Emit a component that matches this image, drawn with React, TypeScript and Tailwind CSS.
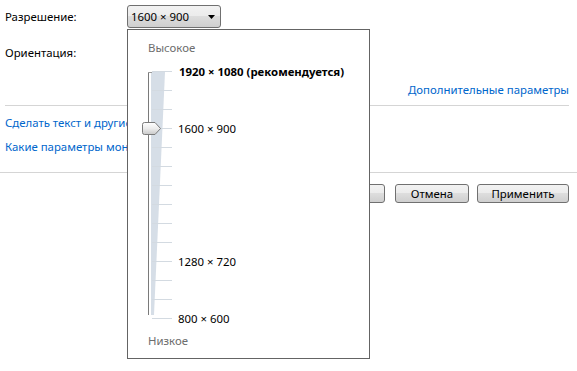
const ticks = Array.from({ length: 14 }, (_, i) => i);

const labels: Record<number, { text: string; bold?: boolean }> = {
  0: { text: "1920 × 1080 (рекомендуется)", bold: true },
  3: { text: "1600 × 900" },
  10: { text: "1280 × 720" },
  13: { text: "800 × 600" },
};

function WinButton({ children, className = "" }: { children: React.ReactNode; className?: string }) {
  return (
    <button
      className={`h-[19px] rounded-[3px] border border-[#707070] bg-[linear-gradient(#f2f2f2,#ebebeb_50%,#dddddd_50%,#cfcfcf)] text-[11.4px] leading-none text-black ${className}`}
    >
      {children}
    </button>
  );
}

function ResolutionPopup() {
  return (
    <div className="absolute left-[127px] top-[29px] w-[243px] h-[330px] border border-[#646464] bg-white">
      <div className="pt-[10px] pl-[20px] h-[26px] flex items-end text-[#6d6d6d]">
        <span className="h-[16px] leading-[16px]">Высокое</span>
      </div>
      <div className="relative mt-[6px]">
        <svg className="absolute left-0 top-0" width="60" height="266">
          <polygon points="23,10 37,10 26,253 23,253" fill="#d6dee7" />
          <line x1="20.5" y1="10" x2="20.5" y2="253" stroke="#7a7a7a" />
          <line x1="20" y1="10.5" x2="24" y2="10.5" stroke="#9a9a9a" />
        </svg>
        {ticks.map((i) => (
          <div key={i} className="relative flex items-center h-[19px] pl-[24px]">
            <div className="w-[20px] h-px bg-[#d3dae1]" />
            {labels[i] && (
              <span className={labels[i].bold ? "font-bold ml-[7px]" : "ml-[6px]"}>{labels[i].text}</span>
            )}
          </div>
        ))}
        <svg className="absolute left-[14px] top-[60px]" width="20" height="13">
          <defs>
            <linearGradient id="thumb" x1="0" y1="0" x2="0" y2="1">
              <stop offset="0" stopColor="#ffffff" />
              <stop offset="0.5" stopColor="#ececec" />
              <stop offset="1" stopColor="#c9c9c9" />
            </linearGradient>
          </defs>
          <path d="M2.5 0.5 H13 L18.5 6.5 L13 12.5 H2.5 Q0.5 12.5 0.5 10.5 V2.5 Q0.5 0.5 2.5 0.5 Z" fill="url(#thumb)" stroke="#7b7b7b" />
        </svg>
      </div>
      <div className="mt-[5px] pl-[20px] h-[16px] leading-[16px] text-[#6d6d6d]">Низкое</div>
    </div>
  );
}

export default function App() {
  return (
    <div className="relative w-[577px] h-[371px] overflow-hidden bg-white text-[11.4px] text-black font-['Noto_Sans',sans-serif]">
      <div className="pt-[5px]">
        <div className="flex items-center h-[23px]">
          <span className="w-[127px] pl-[5px]">Разрешение:</span>
          <div className="flex items-center justify-between w-[94px] h-[23px] rounded-[3px] border border-[#707070] bg-[linear-gradient(#f2f2f2,#ebebeb_50%,#dddddd_50%,#cfcfcf)] pl-[3px] pr-[5px]">
            <span>1600 × 900</span>
            <svg width="7" height="4" className="mt-[1px]">
              <polygon points="0,0 7,0 3.5,4" fill="#000" />
            </svg>
          </div>
        </div>
        <div className="flex items-center h-[23px] mt-[13px] pl-[5px]">Ориентация:</div>
        <div className="flex justify-end h-[16px] mt-[18px] pr-[8px] leading-[16px]">
          <a className="text-[#0066cc]">Дополнительные параметры</a>
        </div>
        <div className="mt-[7px] ml-[5px] mr-[8px] border-t border-[#d5d5d5]" />
        <div className="mt-[9px] pl-[5px] w-[127px] overflow-hidden h-[16px] leading-[16px] text-[#0066cc] whitespace-nowrap">
          Сделать текст и другие элементы больше или меньше
        </div>
        <div className="mt-[8px] pl-[5px] w-[127px] overflow-hidden h-[16px] leading-[16px] text-[#0066cc] whitespace-nowrap">
          Какие параметры монитора следует выбрать?
        </div>
        <div className="mt-[17px] border-t border-[#d5d5d5]" />
        <div className="mt-[11px] flex justify-end gap-[8px] pr-[8px]">
          <WinButton className="w-[73px] mr-[2px]">ОК</WinButton>
          <WinButton className="w-[74px]">Отмена</WinButton>
          <WinButton className="w-[92px]">Применить</WinButton>
        </div>
      </div>
      <ResolutionPopup />
    </div>
  );
}
